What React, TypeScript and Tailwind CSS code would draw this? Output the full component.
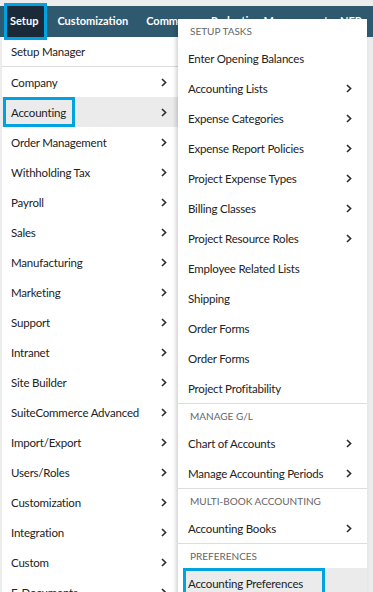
import React from "react";

const leftItems: [string, boolean][] = [
  ["Company", true],
  ["Accounting", true],
  ["Order Management", true],
  ["Withholding Tax", true],
  ["Payroll", true],
  ["Sales", true],
  ["Manufacturing", true],
  ["Marketing", true],
  ["Support", true],
  ["Intranet", true],
  ["Site Builder", true],
  ["SuiteCommerce Advanced", true],
  ["Import/Export", true],
  ["Users/Roles", true],
  ["Customization", true],
  ["Integration", true],
  ["Custom", true],
  ["E-Documents", true],
];

const sections: { title: string; items: [string, boolean][] }[] = [
  {
    title: "SETUP TASKS",
    items: [
      ["Enter Opening Balances", false],
      ["Accounting Lists", true],
      ["Expense Categories", true],
      ["Expense Report Policies", true],
      ["Project Expense Types", true],
      ["Billing Classes", true],
      ["Project Resource Roles", true],
      ["Employee Related Lists", false],
      ["Shipping", false],
      ["Order Forms", false],
      ["Order Forms", false],
      ["Project Profitability", false],
    ],
  },
  {
    title: "MANAGE G/L",
    items: [
      ["Chart of Accounts", true],
      ["Manage Accounting Periods", true],
    ],
  },
  {
    title: "MULTI-BOOK ACCOUNTING",
    items: [["Accounting Books", true]],
  },
  {
    title: "PREFERENCES",
    items: [["Accounting Preferences", false]],
  },
];

function Chevron() {
  return (
    <svg width="6" height="9" viewBox="0 0 6 9" className="shrink-0">
      <path d="M1 1 L4.6 4.5 L1 8" fill="none" stroke="#2a2a2a" strokeWidth="1.6" />
    </svg>
  );
}

export default function App() {
  return (
    <div
      className="relative w-[373px] h-[592px] overflow-hidden bg-[#ececec] pt-[6px] text-[#222222]"
      style={{ fontFamily: "Lato, 'Open Sans', sans-serif" }}
    >
      {/* top nav */}
      <div className="flex h-[31px] items-stretch bg-[#2f596f] pl-[4px] text-[11px] font-bold text-white whitespace-nowrap">
        <div className="-my-[3px] flex items-center border-[3px] border-[#00a3e0] bg-[#1b2a39] pl-[3px] pr-[6px]">
          Setup
        </div>
        <div className="ml-[10px] flex items-center">Customization</div>
        <div className="ml-[18px] flex items-center">Commerce</div>
        <div className="ml-[12px] flex items-center">Reduction Management</div>
        <div className="ml-[12px] flex items-center">NFP</div>
      </div>

      {/* left menu */}
      <div className="ml-[2px] w-[176px] bg-white text-[11.5px] tracking-[-0.2px]">
        <div className="flex h-[30px] items-center border-b border-[#dddddd] pl-[9px] pt-[1px]">Setup Manager</div>
        {leftItems.map(([label, arrow]) => {
          const active = label === "Accounting";
          return (
            <div
              key={label}
              className={
                "flex h-[30px] items-center justify-between pr-[11px] " + (active ? "bg-[#ebebeb] pl-[1px]" : "pl-[9px]")
              }
            >
              {active ? (
                <span className="flex h-full items-center border-[3px] border-[#00a3e0] pl-[5px] pr-[6px] pt-[1px]">{label}</span>
              ) : (
                <span className="pt-[1px]">{label}</span>
              )}
              {arrow && <Chevron />}
            </div>
          );
        })}
      </div>

      {/* flyout */}
      <div className="absolute left-[178px] top-[19px] w-[189px] bg-white text-[11.5px] tracking-[-0.2px] shadow-[-2px_2px_4px_rgba(0,0,0,0.18)]">
        {sections.map((sec, i) => (
          <div key={sec.title} className={i > 0 ? "border-t border-[#dddddd]" : ""}>
            <div className="flex h-[24px] items-center pl-[12px] pt-[1px] text-[10px] tracking-normal text-[#666666]">{sec.title}</div>
            {sec.items.map(([label, arrow], j) => {
              const active = label === "Accounting Preferences";
              if (active) {
                return (
                  <div key={label + j} className="ml-[5px] flex h-[30px] items-center bg-[#ebebeb]">
                    <span className="flex h-full items-center border-[3px] border-[#00a3e0] pl-[2px] pr-[19px] pt-[1px]">
                      {label}
                    </span>
                  </div>
                );
              }
              return (
                <div key={label + j} className="flex h-[30px] items-center justify-between pl-[10px] pr-[15px]">
                  <span className="pt-[1px]">{label}</span>
                  {arrow && <Chevron />}
                </div>
              );
            })}
          </div>
        ))}
      </div>
    </div>
  );
}
